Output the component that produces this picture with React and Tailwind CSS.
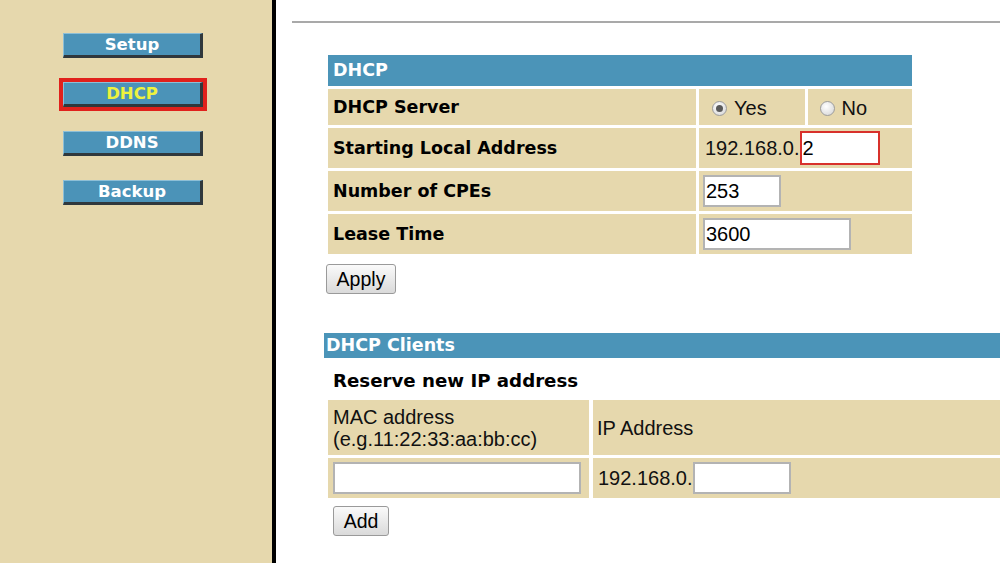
import React from "react";

const SANS = "font-['Liberation_Sans',Arial,sans-serif]";
const BOLD = "font-['DejaVu_Sans',Verdana,sans-serif] font-bold";

function NavButton({ label, active }) {
  return (
    <div
      className={
        "h-[33px] w-[148px] border-4 " +
        (active ? "border-[#e0211c]" : "border-transparent")
      }
    >
      <div
        className={
          "flex h-full w-full items-center justify-center bg-[#4b93b8] pt-[2px] border-t border-l border-t-[#8dbfd7] border-l-[#8dbfd7] border-b-[3px] border-r-[3px] border-b-[#30383c] border-r-[#30383c] text-[16.5px] leading-none " +
          BOLD +
          " " +
          (active ? "text-[#eef23e]" : "text-white")
        }
      >
        {label}
      </div>
    </div>
  );
}

function Radio({ checked }) {
  return (
    <span className="flex h-[15px] w-[15px] items-center justify-center rounded-full border border-[#9c9c9c] bg-[radial-gradient(circle_at_40%_35%,#ffffff,#d2d2d2)]">
      {checked && <span className="h-[7px] w-[7px] rounded-full bg-[#5a5a5a]" />}
    </span>
  );
}

function TextBox({ value, className }) {
  return (
    <input
      readOnly
      defaultValue={value}
      className={
        "bg-white text-black text-[20px] leading-none outline-none px-[1px] " +
        SANS +
        " " +
        className
      }
    />
  );
}

function GrayButton({ label, className }) {
  return (
    <button
      className={
        "flex items-center justify-center rounded-[3px] border border-[#9a9a9a] bg-gradient-to-b from-[#fafafa] to-[#dadada] pt-[1px] text-[19.5px] text-black leading-none " +
        SANS +
        " " +
        className
      }
    >
      {label}
    </button>
  );
}

export default function App() {
  return (
    <div className="flex h-[563px] w-[1000px] overflow-hidden bg-white">
      <aside className="flex w-[276px] shrink-0 flex-col gap-[16px] border-r-4 border-black bg-[#e6d8ad] pl-[59px] pt-[29px]">
        <NavButton label="Setup" />
        <NavButton label="DHCP" active />
        <NavButton label="DDNS" />
        <NavButton label="Backup" />
      </aside>

      <main className="min-w-0 flex-1 overflow-hidden">
        <div className="ml-[16px] mt-[21px] h-[2px] bg-[#a9a9a9]" />

        {/* DHCP table */}
        <section className="ml-[52px] mt-[32px] flex w-[584px] flex-col gap-[3px]">
          <div className={"flex h-[31px] items-center bg-[#4b94b8] pl-[5px] text-[17.5px] text-white " + BOLD}>
            DHCP
          </div>

          <div className="flex h-[36px] gap-[3px]">
            <div className={"flex w-[368px] items-center bg-[#e6d8ad] pl-[5px] pt-[1px] text-[17.5px] text-black " + BOLD}>
              DHCP Server
            </div>
            <div className="flex flex-1 gap-[3px]">
              <div className={"flex flex-1 items-center gap-[7px] bg-[#e6d8ad] pl-[13px] pt-[2px] text-[20px] text-[#111] " + SANS}>
                <Radio checked />
                <span>Yes</span>
              </div>
              <div className={"flex flex-1 items-center gap-[7px] bg-[#e6d8ad] pl-[12px] pt-[2px] text-[20px] text-[#111] " + SANS}>
                <Radio />
                <span>No</span>
              </div>
            </div>
          </div>

          <div className="flex h-[40px] gap-[3px]">
            <div className={"flex w-[368px] items-center bg-[#e6d8ad] pl-[5px] text-[17.5px] text-black " + BOLD}>
              Starting Local Address
            </div>
            <div className={"flex flex-1 items-center bg-[#e6d8ad] pl-[6px] text-[20px] text-[#111] " + SANS}>
              <span>192.168.0.</span>
              <TextBox value="2" className="h-[34px] w-[80px] border-2 border-[#d8312b]" />
            </div>
          </div>

          <div className="flex h-[40px] gap-[3px]">
            <div className={"flex w-[368px] items-center bg-[#e6d8ad] pl-[5px] text-[17.5px] text-black " + BOLD}>
              Number of CPEs
            </div>
            <div className="flex flex-1 items-center bg-[#e6d8ad] pl-[4px]">
              <TextBox value="253" className="h-[32px] w-[78px] border-2 border-[#b3b3b3]" />
            </div>
          </div>

          <div className="flex h-[40px] gap-[3px]">
            <div className={"flex w-[368px] items-center bg-[#e6d8ad] pl-[5px] text-[17.5px] text-black " + BOLD}>
              Lease Time
            </div>
            <div className="flex flex-1 items-center bg-[#e6d8ad] pl-[4px]">
              <TextBox value="3600" className="h-[32px] w-[148px] border-2 border-[#b3b3b3]" />
            </div>
          </div>
        </section>

        <GrayButton label="Apply" className="ml-[50px] mt-[10px] h-[30px] w-[70px]" />

        {/* DHCP Clients */}
        <div className={"ml-[48px] mt-[39px] flex h-[25px] items-center bg-[#4b94b8] pl-[2px] text-[17.5px] text-white " + BOLD}>
          DHCP Clients
        </div>

        <div className={"ml-[57px] mt-[11px] flex h-[24px] items-center text-[18.2px] text-black " + BOLD}>
          Reserve new IP address
        </div>

        <section className="ml-[52px] mt-[7px] flex w-[800px] flex-col gap-[3px]">
          <div className="flex h-[55px] gap-[4px]">
            <div className={"flex w-[261px] flex-col justify-center bg-[#e6d8ad] pl-[5px] text-[20px] leading-[22px] text-[#111] " + SANS}>
              <span>MAC address</span>
              <span>(e.g.11:22:33:aa:bb:cc)</span>
            </div>
            <div className={"flex flex-1 items-center bg-[#e6d8ad] pl-[4px] text-[20px] text-[#111] " + SANS}>
              IP Address
            </div>
          </div>
          <div className="flex h-[40px] gap-[4px]">
            <div className="flex w-[261px] items-center bg-[#e6d8ad] pl-[5px]">
              <TextBox value="" className="h-[32px] w-[248px] border-2 border-[#b3b3b3]" />
            </div>
            <div className={"flex flex-1 items-center bg-[#e6d8ad] pl-[5px] text-[20px] text-[#111] " + SANS}>
              <span>192.168.0.</span>
              <TextBox value="" className="h-[32px] w-[98px] border-2 border-[#b3b3b3]" />
            </div>
          </div>
        </section>

        <GrayButton label="Add" className="ml-[57px] mt-[8px] h-[30px] w-[56px]" />
      </main>
    </div>
  );
}
